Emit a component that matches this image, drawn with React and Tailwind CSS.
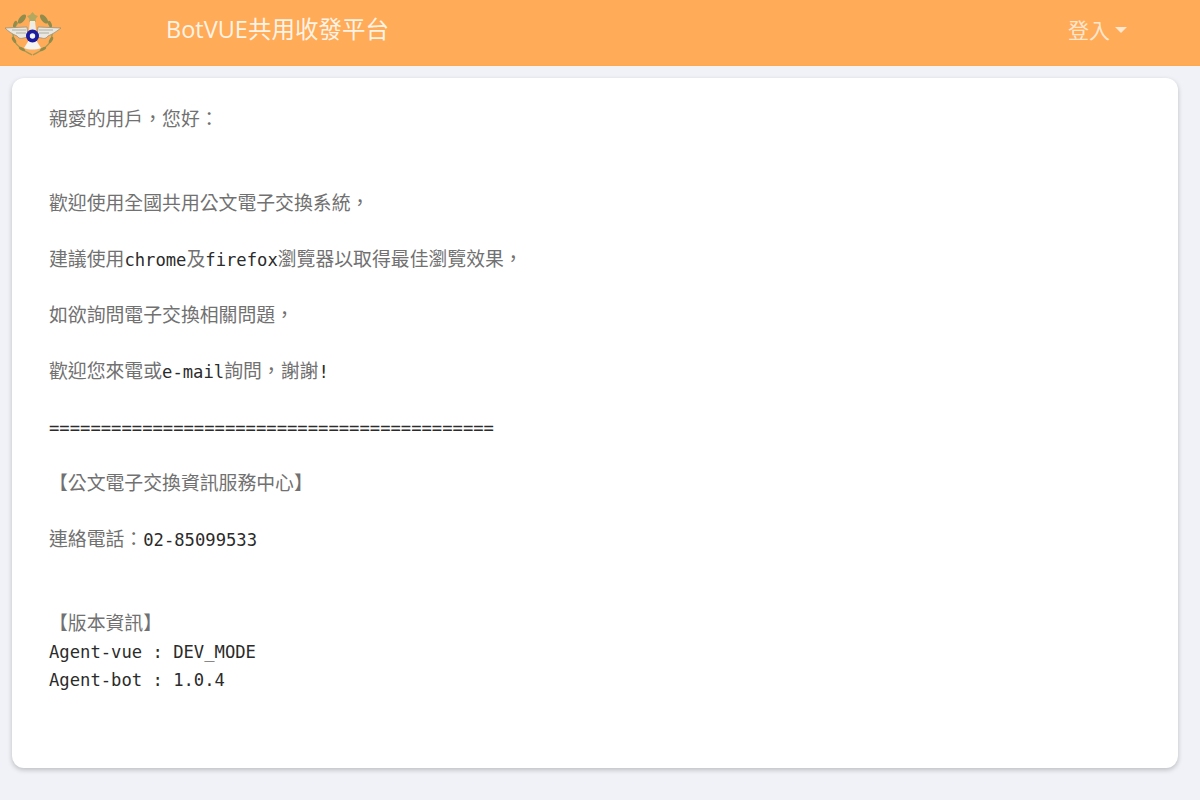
const MONO = "font-['DejaVu_Sans_Mono','Liberation_Mono',monospace] text-[17.2px] text-[#2b2b2b]";

function M({ children }) {
  return <span className={MONO}>{children}</span>;
}

function Logo() {
  return (
    <svg width="62" height="54" viewBox="0 0 62 54" className="blur-[0.4px]">
      {/* wreath */}
      <g fill="none" stroke="#a39a55" strokeWidth="1.4">
        <path d="M24 14 C16 18 10 28 15 38 C19 45 27 48 32 51" />
        <path d="M42 14 C50 18 55 28 50 38 C46 45 38 48 33 51" />
      </g>
      <g fill="#8f8c4c">
        <ellipse cx="22" cy="15" rx="2.6" ry="5.5" transform="rotate(40 22 15)" />
        <ellipse cx="44" cy="15" rx="2.6" ry="5.5" transform="rotate(-40 44 15)" />
        <ellipse cx="15" cy="20" rx="1.6" ry="3.5" transform="rotate(20 15 20)" />
        <ellipse cx="50" cy="20" rx="1.6" ry="3.5" transform="rotate(-20 50 20)" />
        <ellipse cx="14" cy="36" rx="1.5" ry="3.5" transform="rotate(-30 14 36)" />
        <ellipse cx="51" cy="36" rx="1.5" ry="3.5" transform="rotate(30 51 36)" />
        <ellipse cx="22" cy="45" rx="1.5" ry="3.5" transform="rotate(-60 22 45)" />
        <ellipse cx="43" cy="45" rx="1.5" ry="3.5" transform="rotate(60 43 45)" />
      </g>
      <path d="M32.5 8 L35 11 L38 12 L35.5 15 L36 18 L32.5 17 L29 18 L29.5 15 L27 12 L30 11Z" fill="#b3a860" />
      {/* wings */}
      <path d="M5 24 L27 23 L28 33 C22 34 20 36 17 32 C12 30 8 27 5 24Z" fill="#e9e7e0" stroke="#8b8b78" strokeWidth="0.7" />
      <path d="M61 24 L38 23 L37 33 C43 34 45 36 48 32 C53 30 57 27 61 24Z" fill="#e9e7e0" stroke="#8b8b78" strokeWidth="0.7" />
      <path d="M12 26 L26 26 M16 29 L26 29 M53 26 L39 26 M49 29 L39 29" stroke="#9a9a88" strokeWidth="0.7" />
      <path d="M30 17 L35 17 L36 26 L29 26Z" fill="#efece4" />
      {/* base */}
      <path d="M29 36 L36 36 L41 44 C36 46 29 46 24 44Z" fill="#f6f4ee" />
      {/* roundel */}
      <circle cx="32.5" cy="32" r="6.5" fill="#1b1ba0" />
      <circle cx="32.5" cy="32" r="2.7" fill="#f4f4f4" />
    </svg>
  );
}

const lines = [
  <>親愛的用戶，您好：</>,
  null,
  null,
  <>歡迎使用全國共用公文電子交換系統，</>,
  null,
  <>建議使用<M>chrome</M>及<M>firefox</M>瀏覽器以取得最佳瀏覽效果，</>,
  null,
  <>如欲詢問電子交換相關問題，</>,
  null,
  <>歡迎您來電或<M>e-mail</M>詢問，謝謝<M>!</M></>,
  null,
  <M>{"=".repeat(43)}</M>,
  null,
  <>【公文電子交換資訊服務中心】</>,
  null,
  <>連絡電話：<M>02-85099533</M></>,
  null,
  null,
  <>【版本資訊】</>,
  <M>Agent-vue : DEV_MODE</M>,
  <M>Agent-bot : 1.0.4</M>,
];

export default function App() {
  return (
    <div className="flex h-[800px] flex-col overflow-hidden bg-[#f0f2f7] font-['Noto_Sans_CJK_TC',sans-serif]">
      <header className="flex h-[66px] shrink-0 items-center border-b border-[#ffa94d] bg-[#ffab57]">
        <div className="flex w-[166px] items-center pb-[4px]">
          <Logo />
        </div>
        <div className="pb-[6px] font-['Open_Sans','Noto_Sans_CJK_TC',sans-serif] text-[23.5px] text-[#fff3e6]">
          BotVUE共用收發平台
        </div>
        <div className="ml-auto flex items-center gap-[5px] pr-[73px] pb-[6px] text-[21px] text-[#ffe6cf]">
          登入
          <span className="h-0 w-0 border-x-[6px] border-t-[6px] border-x-transparent border-t-[#ffe6cf]" />
        </div>
      </header>
      <main className="pt-[12px] pr-[22px] pl-[12px]">
        <div className="h-[690px] rounded-xl bg-white pt-[26px] pl-[37px] shadow-[0_2px_5px_rgba(0,0,0,0.22)]">
          {lines.map((line, i) => (
            <div key={i} className="h-7 whitespace-pre text-[18.85px] leading-7 text-[#717171]">
              {line}
            </div>
          ))}
        </div>
      </main>
    </div>
  );
}
